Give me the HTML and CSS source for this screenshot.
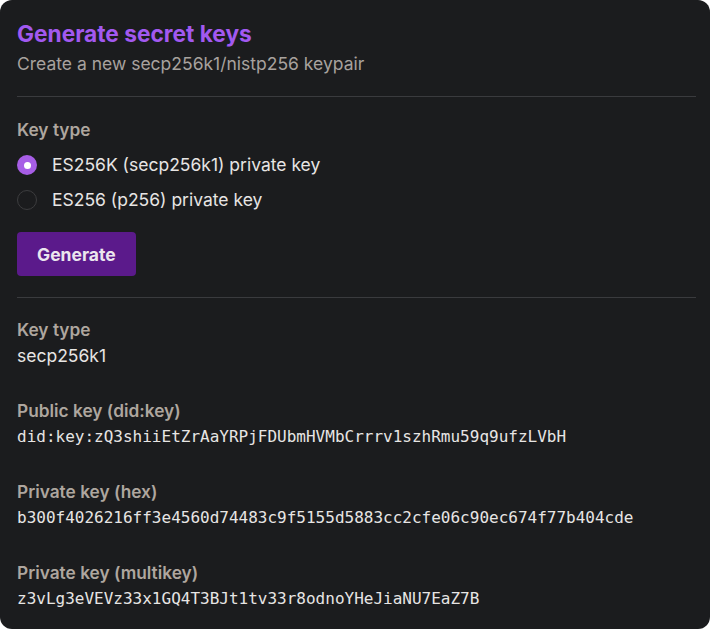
FILE: index.html
```html
<!DOCTYPE html>
<html lang="en">
<head>
<meta charset="utf-8">
<title>Generate secret keys</title>
<link rel="stylesheet" href="styles.css">
</head>
<body>
<main class="card">
  <header class="head">
    <h1 class="title">Generate secret keys</h1>
    <p class="subtitle">Create a new secp256k1/nistp256 keypair</p>
  </header>
  <hr class="rule">
  <section class="form">
    <div class="label">Key type</div>
    <div class="radios">
      <label class="radio"><span class="dot checked"></span><span>ES256K (secp256k1) private key</span></label>
      <label class="radio"><span class="dot"></span><span>ES256 (p256) private key</span></label>
    </div>
    <button class="btn" type="button">Generate</button>
  </section>
  <hr class="rule">
  <section class="results">
    <div class="field">
      <div class="label">Key type</div>
      <div class="value sans">secp256k1</div>
    </div>
    <div class="field">
      <div class="label">Public key (did:key)</div>
      <div class="value">did:key:zQ3shiiEtZrAaYRPjFDUbmHVMbCrrrv1szhRmu59q9ufzLVbH</div>
    </div>
    <div class="field">
      <div class="label">Private key (hex)</div>
      <div class="value">b300f4026216ff3e4560d74483c9f5155d5883cc2cfe06c90ec674f77b404cde</div>
    </div>
    <div class="field">
      <div class="label">Private key (multikey)</div>
      <div class="value">z3vLg3eVEVz33x1GQ4T3BJt1tv33r8odnoYHeJiaNU7EaZ7B</div>
    </div>
  </section>
</main>
</body>
</html>
```

FILE: styles.css
```css
html, body {
  margin: 0;
  padding: 0;
  background: #ffffff;
}
.card {
  box-sizing: border-box;
  width: 710px;
  height: 629px;
  background: #1b1c1e;
  border-radius: 12px;
  padding: 20px 14px 0 17px;
  font-family: Inter, "Noto Sans", sans-serif;
  color: #e7e5e4;
}
.head {
  padding-bottom: 19px;
}
.title {
  margin: 0;
  font-size: 22.7px;
  line-height: 28px;
  font-weight: 700;
  color: #a259f0;
}
.subtitle {
  margin: 3px 0 0 0;
  font-size: 17.5px;
  line-height: 26px;
  color: #a8a29e;
}
.rule {
  border: 0;
  border-top: 1px solid #3a3b3e;
  margin: 0;
}
.form {
  display: flex;
  flex-direction: column;
  align-items: flex-start;
  padding-top: 20px;
  padding-bottom: 21px;
}
.label {
  font-size: 17.3px;
  line-height: 26px;
  font-weight: 600;
  color: #aea69f;
}
.radios {
  display: flex;
  flex-direction: column;
  gap: 9px;
  margin-top: 9px;
}
.radio {
  display: flex;
  align-items: center;
  gap: 15px;
  font-size: 17.5px;
  line-height: 26px;
  color: #e7e5e4;
}
.dot {
  box-sizing: border-box;
  width: 20px;
  height: 20px;
  border-radius: 50%;
  border: 1.5px solid #3c3c3e;
  display: flex;
  align-items: center;
  justify-content: center;
}
.dot.checked {
  border: 0;
  background: #a75ee6;
}
.dot.checked::after {
  content: "";
  width: 7px;
  height: 7px;
  border-radius: 50%;
  background: #ffffff;
}
.btn {
  margin-top: 19px;
  height: 44px;
  padding: 0 20px;
  border: 0;
  border-radius: 4px;
  background: #5b1a8b;
  color: #ebe6ee;
  font-family: Inter, "Noto Sans", sans-serif;
  font-size: 17.5px;
  font-weight: 700;
}
.results {
  padding-top: 19px;
  display: flex;
  flex-direction: column;
  gap: 29px;
}
.value {
  font-family: "DejaVu Sans Mono", monospace;
  font-size: 16px;
  line-height: 26px;
  color: #e7e5e4;
}
.value.sans {
  font-family: Inter, "Noto Sans", sans-serif;
  font-size: 17.5px;
}
```
